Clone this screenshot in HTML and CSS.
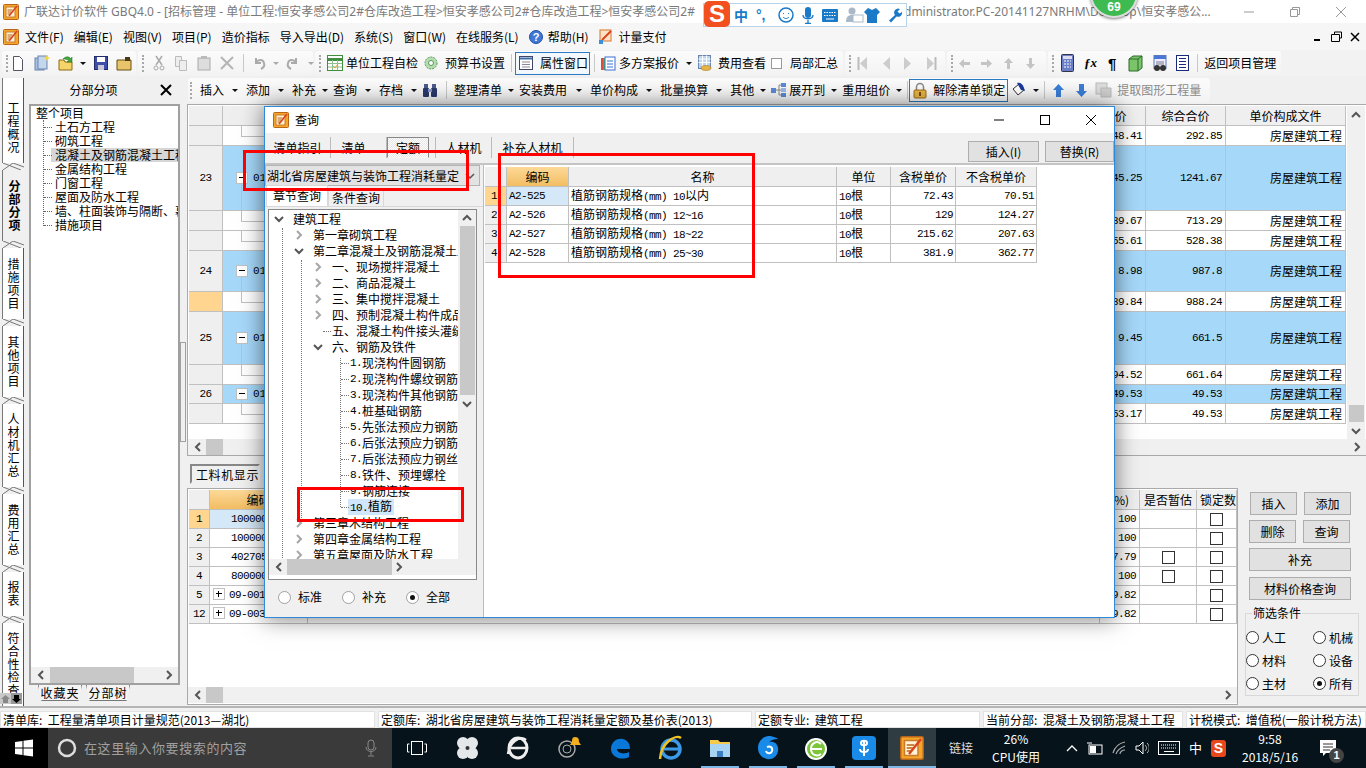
FILE: index.html
```html
<!DOCTYPE html>
<html>
<head>
  <meta charset="utf-8">
  <title>广联达计价软件 GBQ4.0</title>
  <link rel="stylesheet" href="styles.css">
</head>
<body>
  <svg class="defs" width="0" height="0">
    <symbol id="logo" viewBox="0 0 16 16">
      <rect x=".5" y=".5" width="15" height="15" rx="1" fill="#f5a62a" stroke="#b8641a"/>
      <rect x="3" y="3" width="9" height="10" fill="#fff3d6" stroke="#c97a2a"/>
      <path d="M4.5 6h5M4.5 8h4M4.5 10h3" stroke="#b8641a"/>
      <path d="M6 12L14 2" stroke="#d9431e" stroke-width="1.6"/>
    </symbol>
    <symbol id="chev-r" viewBox="0 0 10 10"><path d="M3 1l4 4-4 4" fill="none" stroke="#a6a6a6" stroke-width="2"/></symbol>
    <symbol id="chev-d" viewBox="0 0 10 10"><path d="M1 3l4 4 4-4" fill="none" stroke="#555" stroke-width="2"/></symbol>
  </svg>

  <header class="titlebar">
    <svg class="ic16"><use href="#logo"/></svg>
    <span class="title-a">广联达计价软件 GBQ4.0 - [招标管理 - 单位工程:恒安孝感公司2#仓库改造工程&gt;恒安孝感公司2#仓库改造工程&gt;恒安孝感公司2#</span>
    <span class="title-b">dministrator.PC-20141127NRHM\Desktop\恒安孝感公...</span>
    <div class="win-btns">
      <svg width="12" height="12"><path d="M1 6h10" stroke="#999"/></svg>
      <svg width="12" height="12"><path d="M3.500 3.500v-2h7v7h-2M1.500 3.500h7v7h-7z" fill="none" stroke="#999"/></svg>
      <svg width="12" height="12"><path d="M1 1l10 10M11 1L1 11" stroke="#999"/></svg>
    </div>
  </header>

  <nav class="menubar">
    <svg class="ic16"><use href="#logo"/></svg>
    <span>文件(F)</span><span>编辑(E)</span><span>视图(V)</span><span>项目(P)</span><span>造价指标</span><span>导入导出(D)</span><span>系统(S)</span><span>窗口(W)</span><span>在线服务(L)</span>
    <span class="menu-ic">
      <svg width="14" height="14"><circle cx="7" cy="7" r="6.500" fill="#3f78d8" stroke="#1f4fa8"/><text x="7" y="11" class="svg-q">?</text></svg>
      帮助(H)
    </span>
    <span class="menu-ic">
      <svg width="15" height="16"><rect x="2" y="1" width="11" height="11" fill="#fbe3c8" stroke="#d8752a"/><path d="M4 11L13 2" stroke="#d9431e" stroke-width="2"/><path d="M1 11l4 0 0 4-4 0z" fill="#3a8ee0"/></svg>
      计量支付
    </span>
    <div class="child-btns">
      <svg width="10" height="10"><path d="M1 8h6" stroke="#000" stroke-width="2"/></svg>
      <svg width="11" height="11"><path d="M3.500 3V1h7v6h-2M.5 3.500h8v7h-8z" fill="none" stroke="#000"/></svg>
      <svg width="10" height="10"><path d="M1 1l8 8M9 1L1 9" stroke="#000" stroke-width="1.500"/></svg>
    </div>
  </nav>

  <div class="toolbar">
    <div class="tb-group g-file">
      <i class="grip"></i>
      <svg width="12" height="15"><path d="M1.500.5h6l3 3v11h-9z" fill="#fff" stroke="#556"/></svg>
      <svg class="s-multi" width="16" height="16"><rect x="1" y="3" width="9" height="12" fill="#a9c0e0" stroke="#6a84ad"/><rect x="4" y="1" width="9" height="13" fill="#c4d6ee" stroke="#6a84ad"/><path d="M13 0l1 2 2 1-2 1-1 2-1-2-2-1 2-1z" fill="#f6d63c"/></svg>
      <svg width="16" height="16"><path d="M1 5h5l1 2h7v8H1z" fill="#f5d56a" stroke="#8a6a12"/><path d="M5 4c3-3 6-3 8 0l1-2v5h-5l2-1c-2-2-4-2-6-2z" fill="#3fa83a" stroke="#1f6e1f" stroke-width=".5"/></svg>
      <i class="caret s-caret"></i>
      <svg width="14" height="14"><rect x=".5" y=".5" width="13" height="13" fill="#3d4fa8" stroke="#222a6a"/><rect x="3" y="1" width="8" height="5" fill="#fff"/><rect x="4" y="9" width="6" height="5" fill="#c8c8d8"/></svg>
      <svg width="16" height="15"><path d="M1 4h14v10H1z" fill="#e8c56a" stroke="#6a4e12"/><path d="M9 1h5v4H9z" fill="#4a3a18"/></svg>
    </div>
    <div class="tb-group g-edit">
      <i class="grip"></i>
      <svg width="12" height="16"><path d="M3 1l6 9M9 1L3 10" stroke="#aaa" stroke-width="1.500"/><circle cx="3" cy="13" r="2" fill="none" stroke="#aaa"/><circle cx="9" cy="13" r="2" fill="none" stroke="#aaa"/></svg>
      <svg width="14" height="15"><path d="M1.500.5h6v10h-6z" fill="#eee" stroke="#bbb"/><path d="M5.500 4.500h7v10h-7z" fill="#eee" stroke="#bbb"/></svg>
      <svg width="14" height="15"><rect x="1" y="2" width="12" height="12" fill="#ddd" stroke="#aaa"/><rect x="4" y="0" width="6" height="3" fill="#bbb"/></svg>
      <svg width="14" height="14"><path d="M1 1l12 12M13 1L1 13" stroke="#b5b5b5" stroke-width="2"/></svg>
      <i class="sep"></i>
      <svg width="14" height="14"><path d="M3 2v5h5M3 7c2-4 7-4 8 0 1 3-1 5-3 6" fill="none" stroke="#aaa" stroke-width="2"/></svg>
      <i class="caret off tight"></i>
      <svg class="tight" width="14" height="14"><path d="M11 2v5H6M11 7C9 3 4 3 3 7c-1 3 1 5 3 6" fill="none" stroke="#aaa" stroke-width="2"/></svg>
      <i class="caret off"></i>
    </div>
    <div class="tb-group g-tools">
      <i class="grip"></i>
      <svg class="ml6" width="16" height="16"><rect x=".5" y=".5" width="15" height="15" fill="#fff" stroke="#3f8f3f"/><path d="M.5 4.500h15" stroke="#3f8f3f" stroke-width="3"/><path d="M5.500 5v10M10.500 5v10M1 8.500h14M1 12h14" stroke="#8fbf8f"/><path d="M6 11l2 2 3-4" fill="none" stroke="#e0a020"/></svg>
      <span class="ml3">单位工程自检</span>
      <svg class="ml6" width="14" height="14"><circle cx="7" cy="7" r="6" fill="#b6dcb0" stroke="#4f9a5a" stroke-dasharray="2 1"/><circle cx="7" cy="7" r="2.500" fill="#fff" stroke="#4f9a5a"/></svg>
      <span class="ml7">预算书设置</span>
      <i class="sep ml6"></i>
      <span class="tb-active">
        <svg width="14" height="14"><rect x=".5" y=".5" width="13" height="13" fill="#fff" stroke="#446"/><path d="M.5 2.500h13" stroke="#3a6ea8" stroke-width="2"/><path d="M3 6h8M3 8.500h8M3 11h8" stroke="#889"/></svg>
        属性窗口
      </span>
      <i class="sep ml4"></i>
      <svg class="ml5" width="16" height="15"><rect x="1" y="2" width="6" height="12" fill="#e04a3a"/><rect x="3" y="2" width="6" height="12" fill="#48b04a"/><rect x="5" y="1" width="10" height="13" fill="#fff" stroke="#3a6ed8"/><path d="M7 5h6M7 8h6M7 11h6" stroke="#3a6ed8"/></svg>
      <span class="ml3">多方案报价</span>
      <i class="caret w19"></i>
      <svg width="14" height="16"><rect x=".5" y=".5" width="12" height="13" fill="#bcd6ee" stroke="#6a84ad"/><path d="M.5 4h12M.5 7.500h12M4.500 .5v13M8.500 .5v13" stroke="#fff"/><ellipse cx="8" cy="13" rx="5" ry="2.500" fill="#e6b445" stroke="#9a6a12" stroke-width=".5"/></svg>
      <span class="ml6">费用查看</span>
      <i class="chk chk-sm ml5"></i>
      <span class="ml8">局部汇总</span>
    </div>
    <div class="tb-group g-nav">
      <i class="grip"></i>
      <svg class="ml6" width="11" height="15"><path d="M1.500 1v13" stroke="#bbb" stroke-width="2"/><path d="M10 1L3 7.500 10 14z" fill="#ccc"/></svg>
      <svg class="ml14" width="8" height="15"><path d="M8 1L1 7.500 8 14z" fill="#ccc"/></svg>
      <svg class="ml14" width="8" height="15"><path d="M0 1l7 6.500L0 14z" fill="#ccc"/></svg>
      <svg class="ml14" width="11" height="15"><path d="M9.500 1v13" stroke="#bbb" stroke-width="2"/><path d="M1 1l7 6.500L1 14z" fill="#ccc"/></svg>
    </div>
    <div class="tb-group g-arrows">
      <i class="grip"></i>
      <svg class="ml6" width="11" height="11"><path d="M0 5.500L5 1v3h6v3H5v3z" fill="#c4c4c4"/></svg>
      <svg class="ml11" width="11" height="11"><path d="M11 5.500L6 1v3H0v3h6v3z" fill="#c4c4c4"/></svg>
      <svg class="ml11" width="11" height="11"><path d="M5.500 0L1 5h3v6h3V5h3z" fill="#c4c4c4"/></svg>
      <svg class="ml11" width="11" height="11"><path d="M5.500 11L1 6h3V0h3v6h3z" fill="#c4c4c4"/></svg>
    </div>
    <div class="tb-group g-misc">
      <i class="grip"></i>
      <svg class="ml7" width="13" height="18"><rect x=".5" y=".5" width="12" height="17" rx="1" fill="#6a7fc8" stroke="#334"/><rect x="2" y="2" width="9" height="3" fill="#dde"/><path d="M3 7h2M6 7h2M9 7h1M3 10h2M6 10h2M9 10h1M3 13h2M6 13h2M9 13h1" stroke="#fff"/></svg>
      <span class="fx">ƒx</span>
      <span class="pilcrow">¶</span>
      <svg class="ml12" width="15" height="17"><path d="M1 4l4-3h9v12l-4 3H1z" fill="#7cc46a" stroke="#2a6a2a"/><path d="M1 4h9v12M10 4l4-3" fill="none" stroke="#2a6a2a"/></svg>
      <svg class="ml9" width="16" height="17"><rect x="2" y=".5" width="12" height="13" fill="#eef" stroke="#5a78b8"/><path d="M2 2.500h12" stroke="#4a78d8" stroke-width="3"/><path d="M4 7h8M4 9h8" stroke="#778"/><circle cx="5" cy="13" r="3" fill="#333"/><circle cx="11" cy="13" r="3" fill="#333"/></svg>
      <svg class="ml8" width="13" height="16"><rect x=".5" y=".5" width="12" height="15" fill="#fff" stroke="#1a2a7a"/><path d="M3 3.500h7M3 6.500h7M3 9.500h7M3 12.500h7" stroke="#1a2a7a"/></svg>
      <i class="sep ml8"></i>
      <span class="ml6">返回项目管理</span>
    </div>
  </div>

  <main class="workspace">
    <div class="side-tabs">
      <div class="side-tab first">工程概况</div>
      <svg class="tab-sep" width="24" height="7"><path d="M3 0l18 7M3 7l10-7 11 4" fill="none" stroke="#777"/></svg>
      <div class="side-tab current">分部分项</div>
      <svg class="tab-sep" width="24" height="7"><path d="M3 0l18 7M3 7l10-7 11 4" fill="none" stroke="#777"/></svg>
      <div class="side-tab">措施项目</div>
      <svg class="tab-sep" width="24" height="7"><path d="M3 0l18 7M3 7l10-7 11 4" fill="none" stroke="#777"/></svg>
      <div class="side-tab">其他项目</div>
      <svg class="tab-sep" width="24" height="7"><path d="M3 0l18 7M3 7l10-7 11 4" fill="none" stroke="#777"/></svg>
      <div class="side-tab tall">人材机汇总</div>
      <svg class="tab-sep" width="24" height="7"><path d="M3 0l18 7M3 7l10-7 11 4" fill="none" stroke="#777"/></svg>
      <div class="side-tab">费用汇总</div>
      <svg class="tab-sep" width="24" height="7"><path d="M3 0l18 7M3 7l10-7 11 4" fill="none" stroke="#777"/></svg>
      <div class="side-tab short">报表</div>
      <svg class="tab-sep" width="24" height="7"><path d="M3 0l18 7M3 7l10-7 11 4" fill="none" stroke="#777"/></svg>
      <div class="side-tab last">符合性检查</div>
      <div class="tab-scroll">
        <span class="up"><svg width="9" height="8"><path d="M4.500 0L0 4h2v4h5V4h2z" fill="#888"/></svg></span>
        <span class="down"><svg width="9" height="8"><path d="M4.500 8L0 4h2V0h5v4h2z" fill="#000"/></svg></span>
      </div>
    </div>

    <aside class="tree-panel">
      <div class="tree-head">
        <span>分部分项</span>
        <svg width="12" height="12"><path d="M1 1l10 10M11 1L1 11" stroke="#000" stroke-width="2"/></svg>
      </div>
      <div class="tree-frame">
        <div class="tree-body">
          <div class="t-root">整个项目</div>
          <i class="t-vline"></i>
          <div class="t-item">土石方工程</div>
          <div class="t-item">砌筑工程</div>
          <div class="t-item sel">混凝土及钢筋混凝土工程</div>
          <div class="t-item">金属结构工程</div>
          <div class="t-item">门窗工程</div>
          <div class="t-item">屋面及防水工程</div>
          <div class="t-item">墙、柱面装饰与隔断、幕墙工程</div>
          <div class="t-item">措施项目</div>
        </div>
        <div class="hscroll">
          <svg class="arrow" width="10" height="10"><path d="M7 1L3 5l4 4" fill="none" stroke="#555" stroke-width="2"/></svg>
          <i class="thumb th-tree"></i>
          <svg class="arrow end" width="10" height="10"><path d="M3 1l4 4-4 4" fill="none" stroke="#555" stroke-width="2"/></svg>
        </div>
      </div>
      <div class="bottom-tabs">
        <span>收藏夹</span><span>分部树</span>
      </div>
    </aside>

    <div class="splitter"><i></i></div>

    <section class="content">
      <div class="toolbar2">
        <i class="grip"></i>
        <span class="ml8">插入</span><i class="caret dd"></i>
        <span>添加</span><i class="caret dd"></i>
        <span>补充</span><i class="caret dd-s"></i>
        <span>查询</span><i class="caret dd"></i>
        <span>存档</span><i class="caret dd"></i>
        <svg class="tight" width="16" height="15"><rect x="2" y="1" width="4" height="5" fill="#4a5a8a"/><rect x="10" y="1" width="4" height="5" fill="#4a5a8a"/><rect x="1" y="5" width="6" height="9" rx="1" fill="#2a3a6a"/><rect x="9" y="5" width="6" height="9" rx="1" fill="#2a3a6a"/><rect x="6" y="6" width="4" height="3" fill="#8a9aca"/></svg>
        <i class="sep ml8"></i>
        <span class="ml7">整理清单</span><i class="caret dd-s"></i>
        <span>安装费用</span><i class="caret dd-l"></i>
        <span>单价构成</span><i class="caret dd"></i>
        <span>批量换算</span><i class="caret dd"></i>
        <span>其他</span><i class="caret dd-s"></i>
        <svg width="15" height="14"><rect x="0" y="5" width="5" height="5" fill="#5a8ad8"/><rect x="10" y="0" width="5" height="4" fill="#5a8ad8"/><rect x="10" y="5" width="5" height="4" fill="#9ab8e8"/><rect x="10" y="10" width="5" height="4" fill="#5a8ad8"/><path d="M5 7h3M8 2v10M8 2h2M8 7h2M8 12h2" stroke="#888" fill="none"/></svg>
        <span class="ml3">展开到</span><i class="caret dd-s"></i>
        <span>重用组价</span><i class="caret dd-s"></i>
        <i class="sep"></i>
        <span class="tb-active lock">
          <svg width="14" height="17"><path d="M3.500 8V5a3.500 3.500 0 0 1 7 0v3" fill="none" stroke="#888" stroke-width="1.500"/><rect x="1" y="8" width="12" height="8" rx="1" fill="#e6b445" stroke="#9a6a12"/><rect x="6" y="10" width="2" height="4" fill="#7a4a12"/></svg>
          解除清单锁定
        </span>
        <svg class="ml3" width="16" height="16"><path d="M2 7l6-5 5 6-6 5z" fill="#fff" stroke="#333"/><path d="M6 1c3-1 6 1 7 5l1 3-4-1z" fill="#1a3a9a"/></svg>
        <i class="caret dd-s"></i>
        <i class="sep"></i>
        <svg class="ml8" width="11" height="13"><path d="M5.500 0L0 6h3v7h5V6h3z" fill="#3a7ed8"/></svg>
        <svg class="ml12" width="11" height="13"><path d="M5.500 13L0 7h3V0h5v7h3z" fill="#3a7ed8"/></svg>
        <svg class="ml8" width="17" height="16"><rect x="1" y="1" width="11" height="11" fill="#ddd" stroke="#bbb"/><path d="M6 6h10v9H6z" fill="#cfcfcf" stroke="#bbb"/></svg>
        <span class="off ml5">提取图形工程量</span>
      </div>

      <div class="grid-panel">
        <div class="grid-main">
          <table class="grid upper">
            <colgroup><col class="c34"><col class="c837"><col class="c86"><col class="c80"><col class="c120"></colgroup>
            <thead><tr class="h20"><th></th><th></th><th>综合单价</th><th>综合合价</th><th>单价构成文件</th></tr></thead>
            <tbody>
              <tr class="h20"><td class="rn"></td><td><div class="branch"></div></td><td class="num">148.41</td><td class="num">292.85</td><td class="end">房屋建筑工程</td></tr>
              <tr class="h65 blue"><td class="rn num-c">23</td><td class="node"><i class="minus"></i>01</td><td class="num">645.25</td><td class="num">1241.67</td><td class="end">房屋建筑工程</td></tr>
              <tr class="h20"><td class="rn"></td><td><div class="branch"></div></td><td class="num">539.67</td><td class="num">713.29</td><td class="end">房屋建筑工程</td></tr>
              <tr class="h20"><td class="rn"></td><td><div class="branch"></div></td><td class="num">355.61</td><td class="num">528.38</td><td class="end">房屋建筑工程</td></tr>
              <tr class="h41 blue"><td class="rn num-c">24</td><td class="node"><i class="minus"></i>01</td><td class="num">8.98</td><td class="num">987.8</td><td class="end">房屋建筑工程</td></tr>
              <tr class="h20"><td class="rn pick"></td><td><div class="branch"></div></td><td class="num">939.84</td><td class="num">988.24</td><td class="end">房屋建筑工程</td></tr>
              <tr class="h53 blue"><td class="rn num-c">25</td><td class="node"><i class="minus"></i>01</td><td class="num">9.45</td><td class="num">661.5</td><td class="end">房屋建筑工程</td></tr>
              <tr class="h20"><td class="rn"></td><td><div class="branch"></div></td><td class="num">594.52</td><td class="num">661.64</td><td class="end">房屋建筑工程</td></tr>
              <tr class="h19 blue"><td class="rn num-c">26</td><td class="node"><i class="minus"></i>01</td><td class="num">49.53</td><td class="num">49.53</td><td class="end">房屋建筑工程</td></tr>
              <tr class="h20"><td class="rn"></td><td><div class="branch"></div></td><td class="num">353.17</td><td class="num">49.53</td><td class="end">房屋建筑工程</td></tr>
            </tbody>
          </table>
          <div class="vscroll">
            <svg width="10" height="10"><path d="M1 7l4-4 4 4" fill="none" stroke="#555" stroke-width="2"/></svg>
            <i class="vthumb"></i>
            <svg width="10" height="10"><use href="#chev-d"/></svg>
          </div>
        </div>
        <div class="hscroll">
          <svg class="arrow" width="10" height="10"><path d="M7 1L3 5l4 4" fill="none" stroke="#555" stroke-width="2"/></svg>
          <i class="thumb th-grid"></i>
          <svg class="arrow end" width="10" height="10"><path d="M3 1l4 4-4 4" fill="none" stroke="#555" stroke-width="2"/></svg>
        </div>
      </div>

      <div class="lower-tabs"><span>工料机显示</span></div>

      <div class="lower">
        <div class="lower-grid">
          <div class="lower-main">
            <table class="grid">
              <colgroup><col class="c21"><col class="c98"><col class="c792"><col class="c40"><col class="c57"><col class="c40"></colgroup>
              <thead><tr class="h20"><th></th><th class="hot">编码</th><th></th><th>(%)</th><th>是否暂估</th><th>锁定数</th></tr></thead>
              <tbody>
                <tr class="h19"><td class="rn pick num-c">1</td><td class="cur num-l">10000001</td><td></td><td class="num">100</td><td></td><td class="cb"><i class="chk"></i></td></tr>
                <tr class="h19"><td class="rn num-c">2</td><td class="num-l">10000002</td><td></td><td class="num">100</td><td></td><td class="cb"><i class="chk"></i></td></tr>
                <tr class="h19"><td class="rn num-c">3</td><td class="num-l">40270501</td><td></td><td class="num">87.79</td><td class="cb"><i class="chk"></i></td><td class="cb"><i class="chk"></i></td></tr>
                <tr class="h19"><td class="rn num-c">4</td><td class="num-l">80000001</td><td></td><td class="num">100</td><td class="cb"><i class="chk"></i></td><td class="cb"><i class="chk"></i></td></tr>
                <tr class="h19"><td class="rn num-c">5</td><td class="num-l plus-cell"><i class="plus"></i>09-001</td><td></td><td class="num">59.82</td><td></td><td class="cb"><i class="chk"></i></td></tr>
                <tr class="h19"><td class="rn num-c">12</td><td class="num-l plus-cell"><i class="plus"></i>09-003</td><td></td><td class="num">59.82</td><td></td><td class="cb"><i class="chk"></i></td></tr>
              </tbody>
            </table>
          </div>
          <div class="hscroll">
            <svg class="arrow" width="10" height="10"><path d="M7 1L3 5l4 4" fill="none" stroke="#555" stroke-width="2"/></svg>
            <i class="thumb th-grid"></i>
            <svg class="arrow end" width="10" height="10"><path d="M3 1l4 4-4 4" fill="none" stroke="#555" stroke-width="2"/></svg>
          </div>
        </div>

        <div class="side-panel">
          <div class="btn-row first"><button class="btn">插入</button><button class="btn">添加</button></div>
          <div class="btn-row"><button class="btn">删除</button><button class="btn">查询</button></div>
          <button class="btn wide">补充</button>
          <button class="btn wide">材料价格查询</button>
          <fieldset class="filter">
            <legend>筛选条件</legend>
            <label><i class="radio"></i>人工</label><label><i class="radio"></i>机械</label>
            <label><i class="radio"></i>材料</label><label><i class="radio"></i>设备</label>
            <label><i class="radio"></i>主材</label><label><i class="radio on"></i>所有</label>
          </fieldset>
        </div>
      </div>
    </section>
  </main>

  <footer class="statusbar">
    <span class="s1">清单库:&nbsp; 工程量清单项目计量规范(2013—湖北)</span>
    <span class="s2">定额库:&nbsp; 湖北省房屋建筑与装饰工程消耗量定额及基价表(2013)</span>
    <span class="s3">定额专业:&nbsp; 建筑工程</span>
    <span class="s4">当前分部:&nbsp; 混凝土及钢筋混凝土工程</span>
    <span class="s5">计税模式:&nbsp; 增值税(一般计税方法)</span>
  </footer>

  <div class="taskbar">
    <div class="start"><svg width="18" height="18"><path d="M0 3l7.500-1v6.500H0zM8.500 1.800L18 .5v8H8.500zM0 9.500h7.500V16L0 15zM8.500 9.500H18v8l-9.500-1.300z" fill="#fff"/></svg></div>
    <div class="search">
      <svg width="20" height="20"><circle cx="10" cy="10" r="8" fill="none" stroke="#ddd" stroke-width="2.500"/></svg>
      <span>在这里输入你要搜索的内容</span>
      <svg class="mic" width="12" height="18"><rect x="3" y="1" width="6" height="10" rx="3" fill="none" stroke="#888"/><path d="M1 8c0 6 10 6 10 0M6 13v3M3 17h6" fill="none" stroke="#888"/></svg>
    </div>
    <div class="task tv"><svg width="20" height="16"><rect x="4.500" y="1.500" width="11" height="13" fill="none" stroke="#fff"/><path d="M2.500 4H.5v8h2M17.500 4h2v8h-2" fill="none" stroke="#fff"/></svg></div>
    <div class="task wide"><svg width="22" height="24"><g fill="#e4e8ea"><circle cx="7" cy="7" r="6"/><circle cx="16" cy="7" r="6"/><circle cx="7" cy="17" r="6"/><circle cx="16" cy="17" r="6"/></g><circle cx="11.500" cy="12" r="2" fill="#333"/></svg></div>
    <div class="task wide"><svg width="24" height="24"><ellipse cx="12" cy="12" rx="9" ry="10" fill="none" stroke="#eee" stroke-width="3"/><path d="M5 12h15M20 4C14 -1 3 6 2 18" fill="none" stroke="#eee" stroke-width="2.500"/></svg></div>
    <div class="task wide"><svg width="26" height="26"><circle cx="11" cy="14" r="8" fill="none" stroke="#aaa" stroke-width="1.500"/><circle cx="11" cy="14" r="4" fill="none" stroke="#aaa"/><path d="M19 2c-3 0-3 3-3 5l-2 3h11l-2-3c0-2 0-5-4-5z" fill="#f2b01e"/></svg></div>
    <div class="task wide"><svg width="24" height="24"><path d="M3 13C3 5 10 2 15 3c4 1 7 4 7 10H9c0 4 7 6 12 3v5c-8 4-18 0-18-8z" fill="#0a78d8"/></svg></div>
    <div class="task wide"><svg width="26" height="26"><circle cx="13" cy="14" r="9" fill="none" stroke="#3a9ae8" stroke-width="3.500"/><path d="M6 14h15" stroke="#3a9ae8" stroke-width="3"/><path d="M23 3C17-1 3 8 2 24" fill="none" stroke="#f2c21e" stroke-width="2.500"/></svg></div>
    <div class="task run"><svg width="22" height="22"><path d="M1 3h8l2 2h10v15H1z" fill="#f5c94a"/><rect x="1" y="7" width="20" height="13" fill="#a8d4f2"/><rect x="8" y="14" width="6" height="6" fill="#3a7ec8"/></svg></div>
    <div class="task run"><svg width="22" height="26"><path d="M11 1c5 0 9 2 10 3-4 0-7 1-9 3 5-1 10 2 9 9-1 6-6 9-11 8C4 23 1 18 1 13 1 7 5 2 11 1z" fill="#1a8ae8"/><path d="M10 12c3-1 6 0 5 4-1 3-5 3-6 0" fill="none" stroke="#fff" stroke-width="2"/></svg></div>
    <div class="task run"><svg width="24" height="26"><circle cx="12" cy="14" r="11" fill="#fff"/><circle cx="12" cy="14" r="9" fill="#7cc43a"/><path d="M6 14h12M17 9c-4-4-10-1-10 5s6 8 10 5" fill="none" stroke="#fff" stroke-width="2"/></svg></div>
    <div class="task run"><svg width="24" height="24"><rect width="24" height="24" rx="4" fill="#1a8ae8"/><path d="M12 4v16M8 13c0 4 8 4 8 0M9 7c0-3 6-3 6 0s-6 3-6 0" fill="none" stroke="#fff" stroke-width="2"/></svg></div>
    <div class="task run on"><svg width="24" height="24"><use href="#logo"/></svg></div>
    <span class="t-link">链接</span>
    <div class="t-cpu"><span>26%</span><span>CPU使用</span></div>
    <div class="tray">
      <svg width="12" height="8"><path d="M1 7l5-5 5 5" fill="none" stroke="#fff" stroke-width="1.300"/></svg>
      <svg width="16" height="13"><rect x="2" y="3" width="13" height="9" fill="none" stroke="#fff"/><rect x="3" y="4" width="6" height="7" fill="#fff"/><path d="M0 1h5" stroke="#fff"/></svg>
      <svg width="14" height="14"><path d="M1 12C3 5 8 2 13 1M4 13c1-4 4-6 9-8M8 13c0-2 2-4 5-4" fill="none" stroke="#aaa" stroke-width="1.200"/></svg>
      <svg width="14" height="14"><path d="M1 5h3l4-4v12L4 9H1z" fill="none" stroke="#fff"/><path d="M10 4c2 2 2 4 0 6M12 2c3 3 3 7 0 10" fill="none" stroke="#bbb"/></svg>
      <svg width="22" height="14"><rect x=".5" y=".5" width="21" height="13" fill="none" stroke="#fff"/><path d="M3 4h16M3 7h16" stroke="#fff" stroke-dasharray="1 1"/><path d="M6 10.500h10" stroke="#fff"/></svg>
      <span class="t-ime">中</span>
      <span class="t-s">S</span>
    </div>
    <div class="t-clock"><span>9:58</span><span>2018/5/16</span></div>
    <div class="t-note">
      <svg width="16" height="16"><path d="M0 0h16v13H6l-3 3v-3H0z" fill="#fff"/><path d="M3 4h10M3 7h10M3 10h7" stroke="#333"/></svg>
      <b>1</b>
    </div>
  </div>

  <!-- query dialog, sits over the main window -->
  <div class="dialog">
    <div class="dlg-title">
      <svg class="ic16"><use href="#logo"/></svg>
      <span>查询</span>
      <div class="dlg-btns">
        <svg width="12" height="12"><path d="M1 6h10" stroke="#000"/></svg>
        <svg width="12" height="12"><rect x="1.500" y="1.500" width="9" height="9" fill="none" stroke="#000"/></svg>
        <svg width="12" height="12"><path d="M1 1l10 10M11 1L1 11" stroke="#000"/></svg>
      </div>
    </div>
    <div class="dlg-tabs">
      <span class="tab t1">清单指引</span>
      <span class="tab t2">清单</span>
      <span class="tab cur-tab">定额</span>
      <span class="tab t4">人材机</span>
      <span class="tab t5">补充人材机</span>
      <button class="btn dlg-btn first">插入(I)</button>
      <button class="btn dlg-btn">替换(R)</button>
    </div>
    <div class="dlg-body">
      <div class="dlg-left">
        <div class="combo">
          <span>湖北省房屋建筑与装饰工程消耗量定</span>
          <svg width="10" height="10"><path d="M1 3l4 4 4-4" fill="none" stroke="#555" stroke-width="1.500"/></svg>
        </div>
        <div class="sub-tabs"><span class="on">章节查询</span><span>条件查询</span></div>
        <div class="q-frame">
          <div class="q-main">
            <div class="q-tree">
              <i class="q-v v1"></i><i class="q-v v2"></i><i class="q-v v3"></i>
              <div class="q-row l0"><svg class="chev" width="10" height="10"><use href="#chev-d"/></svg>建筑工程</div>
              <div class="q-row l1"><svg class="chev" width="10" height="10"><use href="#chev-r"/></svg>第一章砌筑工程</div>
              <div class="q-row l1"><svg class="chev" width="10" height="10"><use href="#chev-d"/></svg>第二章混凝土及钢筋混凝土工程</div>
              <div class="q-row l2"><svg class="chev" width="10" height="10"><use href="#chev-r"/></svg>一、现场搅拌混凝土</div>
              <div class="q-row l2"><svg class="chev" width="10" height="10"><use href="#chev-r"/></svg>二、商品混凝土</div>
              <div class="q-row l2"><svg class="chev" width="10" height="10"><use href="#chev-r"/></svg>三、集中搅拌混凝土</div>
              <div class="q-row l2"><svg class="chev" width="10" height="10"><use href="#chev-r"/></svg>四、预制混凝土构件成品</div>
              <div class="q-row l2 dot">五、混凝土构件接头灌缝</div>
              <div class="q-row l2"><svg class="chev" width="10" height="10"><use href="#chev-d"/></svg>六、钢筋及铁件</div>
              <div class="q-row l3"><span class="n">1.</span>现浇构件圆钢筋</div>
              <div class="q-row l3"><span class="n">2.</span>现浇构件螺纹钢筋</div>
              <div class="q-row l3"><span class="n">3.</span>现浇构件其他钢筋</div>
              <div class="q-row l3"><span class="n">4.</span>桩基础钢筋</div>
              <div class="q-row l3"><span class="n">5.</span>先张法预应力钢筋</div>
              <div class="q-row l3"><span class="n">6.</span>后张法预应力钢筋</div>
              <div class="q-row l3"><span class="n">7.</span>后张法预应力钢丝</div>
              <div class="q-row l3"><span class="n">8.</span>铁件、预埋螺栓</div>
              <div class="q-row l3"><span class="n">9.</span>钢筋连接</div>
              <div class="q-row l3"><span class="q-sel"><span class="n">10.</span>植筋</span></div>
              <div class="q-row l1"><svg class="chev" width="10" height="10"><use href="#chev-r"/></svg>第三章木结构工程</div>
              <div class="q-row l1"><svg class="chev" width="10" height="10"><use href="#chev-r"/></svg>第四章金属结构工程</div>
              <div class="q-row l1"><svg class="chev" width="10" height="10"><use href="#chev-r"/></svg>第五章屋面及防水工程</div>
            </div>
            <div class="vscroll q-vs">
              <svg width="10" height="10"><path d="M1 7l4-4 4 4" fill="none" stroke="#555" stroke-width="2"/></svg>
              <i class="vthumb q-thumb"></i>
              <svg class="q-down" width="10" height="10"><use href="#chev-d"/></svg>
            </div>
          </div>
          <div class="hscroll q-hs">
            <svg class="arrow" width="10" height="10"><path d="M7 1L3 5l4 4" fill="none" stroke="#555" stroke-width="2"/></svg>
            <i class="thumb th-q"></i>
            <svg class="arrow end" width="10" height="10"><path d="M3 1l4 4-4 4" fill="none" stroke="#555" stroke-width="2"/></svg>
          </div>
        </div>
        <div class="q-radios">
          <label><i class="radio soft"></i>标准</label>
          <label><i class="radio soft"></i>补充</label>
          <label><i class="radio soft on"></i>全部</label>
        </div>
      </div>
      <div class="dlg-right">
        <table class="grid q-grid">
          <colgroup><col class="c22"><col class="c62"><col class="c268"><col class="c54"><col class="c65"><col class="c81"></colgroup>
          <thead><tr class="h20"><th></th><th class="hot">编码</th><th>名称</th><th>单位</th><th>含税单价</th><th>不含税单价</th></tr></thead>
          <tbody>
            <tr class="h19"><td class="rn pick q-rn">1</td><td class="cur num-q">A2-525</td><td>植筋钢筋规格<span class="n">(mm) 10</span>以内</td><td><span class="n">10</span>根</td><td class="num">72.43</td><td class="num">70.51</td></tr>
            <tr class="h19"><td class="rn q-rn">2</td><td class="num-q">A2-526</td><td>植筋钢筋规格<span class="n">(mm) 12~16</span></td><td><span class="n">10</span>根</td><td class="num">129</td><td class="num">124.27</td></tr>
            <tr class="h19"><td class="rn q-rn">3</td><td class="num-q">A2-527</td><td>植筋钢筋规格<span class="n">(mm) 18~22</span></td><td><span class="n">10</span>根</td><td class="num">215.62</td><td class="num">207.63</td></tr>
            <tr class="h19"><td class="rn q-rn">4</td><td class="num-q">A2-528</td><td>植筋钢筋规格<span class="n">(mm) 25~30</span></td><td><span class="n">10</span>根</td><td class="num">381.9</td><td class="num">362.77</td></tr>
          </tbody>
        </table>
      </div>
    </div>
  </div>

  <!-- red markup boxes drawn on top of the screenshot -->
  <i class="mark m1"></i>
  <i class="mark m2"></i>
  <i class="mark m3"></i>

  <!-- sogou input bar -->
  <div class="ime">
    <span class="ime-logo">S</span>
    <span class="ime-zh">中</span>
    <span class="ime-pt">°,</span>
    <svg width="16" height="16"><circle cx="8" cy="8" r="7" fill="none" stroke="#1a7ac8" stroke-width="1.500"/><path d="M5 10c2 2 4 2 6 0M5.500 6v1M10.500 6v1" fill="none" stroke="#1a7ac8"/></svg>
    <svg width="12" height="17"><rect x="3" y="0" width="6" height="11" rx="3" fill="#1a7ac8"/><path d="M1 8c0 5 10 5 10 0M6 13v3M3 16.500h6" fill="none" stroke="#1a7ac8" stroke-width="1.300"/></svg>
    <svg width="16" height="13"><rect width="16" height="13" rx="1" fill="#1a7ac8"/><path d="M2 3.500h12M2 6.500h12" stroke="#fff" stroke-dasharray="1.500 1"/><path d="M4 10h8" stroke="#fff"/></svg>
    <svg class="ime-user" width="18" height="16"><circle cx="6" cy="4" r="3.500" fill="#a9b9c9"/><path d="M0 15c0-6 3-7 6-7s6 1 6 7z" fill="#a9b9c9"/><rect x="7" y="8" width="10" height="7" fill="#fff" stroke="#a9b9c9"/></svg>
    <svg width="16" height="15"><path d="M4 0l4 2 4-2 4 4-3 3v8H3V7L0 4z" fill="#1a7ac8"/></svg>
    <svg width="15" height="15"><path d="M14 4a4 4 0 0 1-5.500 4.500L3 14.500 1 12.500l6-5.500A4 4 0 0 1 12 1L9.500 3.500 11.500 5.500z" fill="#1a7ac8"/></svg>
  </div>

  <!-- speed ball over the title bar -->
  <div class="ball"><span>69</span></div>
</body>
</html>
```

FILE: styles.css
```css
* {
  box-sizing: border-box;
}

html, body {
  margin: 0;
  width: 1366px;
  height: 768px;
  overflow: hidden;
}

body {
  position: relative;
  background: #f0f0f0;
  color: #000;
  font-family: "Noto Sans CJK SC", "Liberation Sans", sans-serif;
  font-size: 12px;
  line-height: 14px;
}

i {
  font-style: normal;
}

svg {
  display: block;
  flex: none;
}

.defs {
  position: absolute;
}

.ic16 {
  width: 16px;
  height: 16px;
}

.svg-q {
  fill: #fff;
  font: bold 11px "Liberation Sans", sans-serif;
  text-anchor: middle;
}

/* spacing helpers */
.ml3 { margin-left: 3px; }
.ml4 { margin-left: 4px; }
.ml5 { margin-left: 5px; }
.ml6 { margin-left: 6px; }
.ml7 { margin-left: 7px; }
.ml8 { margin-left: 8px; }
.ml9 { margin-left: 9px; }
.ml11 { margin-left: 11px; }
.ml12 { margin-left: 12px; }
.ml14 { margin-left: 14px; }
.tight { margin-left: -3px; }

/* title bar */
.titlebar {
  display: flex;
  align-items: center;
  height: 23px;
  padding-left: 3px;
  background: #fff;
  color: #7a7a7a;
  font-family: "Noto Sans", "Noto Sans CJK SC", sans-serif;
}

.title-a {
  width: 680px;
  margin-left: 5px;
  overflow: hidden;
  white-space: nowrap;
}

.title-b {
  margin-left: 200px;
  white-space: nowrap;
}

.win-btns {
  display: flex;
  gap: 34px;
  margin-left: auto;
  padding-right: 19px;
}

/* menu */
.menubar {
  display: flex;
  align-items: center;
  gap: 10px;
  height: 27px;
  padding-left: 3px;
  background: #f6f6f6;
}

.menubar > svg {
  margin-right: -4px;
}

.menu-ic {
  display: flex;
  align-items: center;
  gap: 5px;
}

.child-btns {
  display: flex;
  align-items: center;
  gap: 8px;
  margin-left: auto;
  padding-right: 6px;
}

/* toolbars */
.toolbar {
  display: flex;
  gap: 2px;
  height: 26px;
  padding: 1px 0 1px 2px;
  background: #f2f2f2;
}

.tb-group {
  display: flex;
  align-items: center;
  padding: 0 4px;
  border-radius: 3px;
  background: linear-gradient(#fbfbfb, #f3f3f3);
  white-space: nowrap;
}

.g-file { width: 134px; gap: 8px; }
.g-edit { width: 175px; gap: 9px; }
.g-tools { width: 528px; }
.g-nav { width: 100px; }
.g-arrows { width: 99px; }
.g-misc { width: 233px; }

.g-file .grip {
  margin-right: -4px;
}

.s-multi {
  margin-left: 2px;
}

.s-caret {
  margin-left: -2px;
}

.grip {
  flex: none;
  width: 2px;
  height: 17px;
  border-left: 2px dotted #a8a8a8;
}

.sep {
  flex: none;
  width: 1px;
  height: 18px;
  background: #c8c8c8;
}

.caret {
  display: flex;
  flex: none;
  align-items: center;
  justify-content: center;
  height: 10px;
}

.caret::after {
  content: "";
  border-left: 3px solid transparent;
  border-right: 3px solid transparent;
  border-top: 3px solid #111;
}

.caret.off::after {
  border-top-color: #aaa;
}

.dd { width: 22px; }
.dd-s { width: 17px; }
.dd-l { width: 23px; }
.w19 { width: 19px; }

.tb-active {
  display: flex;
  align-items: center;
  gap: 7px;
  width: 75px;
  height: 23px;
  margin-left: 3px;
  padding-left: 3px;
  border: 1px solid #2b7cc4;
  background: #f3f8fc;
}

.tb-active.lock {
  width: 99px;
  gap: 6px;
  padding-left: 3px;
  margin-left: 1px;
  background: #fbfbfb;
}

.fx {
  margin-left: 10px;
  font: italic bold 13px "Liberation Serif", serif;
}

.pilcrow {
  margin-left: 11px;
  font: bold 15px "Liberation Sans", sans-serif;
}

.off {
  color: #8a8a8a;
}

/* main area */
.workspace {
  display: flex;
  height: 630px;
}

.side-tabs {
  position: relative;
  flex: none;
  width: 27px;
  height: 630px;
  padding-top: 2px;
  overflow: hidden;
}

.side-tab {
  display: flex;
  width: 22px;
  height: 71px;
  margin-left: 2px;
  padding: 9px 0;
  border-left: 1px solid #777;
  border-right: 1px solid #555;
  background: #fff;
  justify-content: center;
  writing-mode: vertical-rl;
  text-orientation: upright;
  letter-spacing: 1px;
  line-height: 20px;
  white-space: nowrap;
}

.side-tab.tall { height: 83px; }
.side-tab.short { height: 44px; }

.side-tab.last {
  height: 90px;
  justify-content: flex-start;
}

.side-tab.first {
  height: 85px;
  padding: 0 0 9px;
  justify-content: flex-end;
}

.side-tab.current {
  background: #f0f0f0;
  border-right: 0;
  font-weight: 700;
}

.tab-scroll {
  position: absolute;
  left: 0;
  top: 617px;
  display: flex;
}

.tab-scroll span {
  display: flex;
  align-items: center;
  justify-content: center;
  width: 11px;
  height: 11px;
  background: #c8c8c8;
}

.tab-scroll .down {
  background: #999;
}

/* left tree */
.tree-panel {
  flex: none;
  width: 151px;
  margin-left: 2px;
}

.tree-head {
  position: relative;
  display: flex;
  align-items: center;
  justify-content: center;
  height: 28px;
  padding-right: 22px;
}

.tree-head svg {
  position: absolute;
  right: 8px;
  top: 8px;
}

.tree-frame {
  height: 581px;
  border: 2px solid #a0a0a0;
  background: #fff;
}

.tree-body {
  position: relative;
  height: 561px;
  overflow: hidden;
}

.t-root {
  height: 14px;
  padding-left: 5px;
  white-space: nowrap;
}

.t-item {
  position: relative;
  height: 14px;
  padding-left: 24px;
  white-space: nowrap;
}

.t-item::before {
  content: "";
  position: absolute;
  left: 13px;
  top: 7px;
  width: 8px;
  border-top: 1px dotted #666;
}

.t-item.sel {
  margin-left: 20px;
  padding-left: 4px;
  background: #d6d6d6;
}

.t-item.sel::before {
  left: -7px;
}

.t-vline {
  position: absolute;
  left: 12px;
  top: 14px;
  height: 106px;
  border-left: 1px dotted #666;
}

.hscroll {
  display: flex;
  align-items: center;
  height: 16px;
  padding-left: 5px;
  background: #f0f0f0;
}

.hscroll .end {
  margin-left: auto;
  margin-right: 4px;
}

.thumb {
  flex: none;
  height: 16px;
  background: #c8c8c8;
}

.th-tree { width: 84px; margin-left: 4px; }
.th-grid { width: 17px; margin-left: 3px; }
.th-q { width: 105px; margin-left: 3px; }

.bottom-tabs {
  display: flex;
  gap: 4px;
  height: 20px;
  padding-left: 9px;
  letter-spacing: 1px;
}

.bottom-tabs span {
  display: flex;
  align-items: center;
  justify-content: center;
  width: 44px;
  height: 16px;
  background: #f4f4f4;
  border-bottom: 1px solid #777;
  border-left: 1px solid #777;
  border-right: 1px solid #777;
  clip-path: polygon(0 0, 100% 0, 92% 100%, 8% 100%);
}

/* splitter */
.splitter {
  display: flex;
  flex: none;
  width: 7px;
  padding-top: 266px;
}

.splitter i {
  width: 6px;
  height: 100px;
  border: 1px solid #a0a0a0;
  background: #f0f0f0;
}

/* content column */
.content {
  flex: none;
  width: 1179px;
}

.toolbar2 {
  display: flex;
  align-items: center;
  width: 1022px;
  height: 24px;
  margin: 2px 0 2px 1px;
  padding-left: 2px;
  border-radius: 3px;
  background: linear-gradient(#fbfbfb, #f3f3f3);
  white-space: nowrap;
}

.grid-panel {
  height: 352px;
  border: 1px solid #a9a9a9;
  border-right: 0;
  background: #fff;
}

.grid-main {
  display: flex;
  height: 334px;
  padding: 1px 0 0 1px;
}

.vscroll {
  display: flex;
  flex-direction: column;
  align-items: center;
  width: 18px;
  margin-left: 1px;
  padding-top: 4px;
  background: #f0f0f0;
}

.vthumb {
  width: 15px;
  height: 17px;
  margin-top: auto;
  background: #c8c8c8;
}

.vscroll svg:last-child {
  margin: 4px 0 3px;
}

.grid {
  flex: none;
  align-self: flex-start;
  border-collapse: separate;
  border-spacing: 0;
  table-layout: fixed;
  background: #fff;
}

.upper { width: 1157px; }

.c21 { width: 21px; }
.c22 { width: 22px; }
.c34 { width: 34px; }
.c40 { width: 40px; }
.c54 { width: 54px; }
.c57 { width: 57px; }
.c62 { width: 62px; }
.c65 { width: 65px; }
.c80 { width: 80px; }
.c81 { width: 81px; }
.c86 { width: 86px; }
.c98 { width: 98px; }
.c120 { width: 120px; }
.c268 { width: 268px; }
.c792 { width: 792px; }
.c837 { width: 837px; }

.grid th,
.grid td {
  padding: 0 3px;
  border-right: 1px solid #c0c0c0;
  border-bottom: 1px solid #c0c0c0;
  overflow: hidden;
  white-space: nowrap;
  font-weight: 400;
}

.grid th {
  background: #efefef;
  text-align: center;
}

.grid th.hot {
  background: linear-gradient(#fdd998, #f2bd62);
}

.h19 td { height: 19px; }
.h20 th, .h20 td { height: 20px; }
.h41 td { height: 41px; }
.h53 td { height: 53px; }
.h65 td { height: 65px; }

.grid .rn {
  padding: 0;
  background: #efefef;
}

.blue td {
  background: #a6d8fa;
}

.blue .rn {
  background: #efefef;
}

.grid .rn.pick {
  background: #ffd58f;
}

.num {
  font: 11px/14px "Liberation Mono", monospace;
  letter-spacing: -.6px;
  text-align: right;
}

.n {
  font-family: "Liberation Mono", monospace;
  font-size: 11px;
  letter-spacing: -.6px;
}

.num-c,
.q-rn {
  font: 11px/14px "Liberation Mono", monospace;
  letter-spacing: -.6px;
  text-align: center;
}

.num-l,
.num-q {
  font: 11px/14px "Liberation Mono", monospace;
  letter-spacing: -.6px;
}

.grid .num-l {
  padding-left: 21px;
}

.grid .plus-cell {
  padding-left: 3px;
}

.end {
  text-align: right;
}

.grid td:has(> .branch) {
  padding: 0;
  vertical-align: top;
}

.branch {
  width: 35px;
  height: 11px;
  margin-left: 18px;
  border-left: 1px solid #c0c0c0;
  border-bottom: 1px solid #c0c0c0;
}

.grid .node {
  padding-left: 30px;
  position: relative;
  font: 11px/14px "Liberation Mono", monospace;
}

.minus,
.plus {
  position: absolute;
  left: 13px;
  top: 50%;
  width: 12px;
  height: 12px;
  margin-top: -6px;
  border: 1px solid #c0c0c0;
  background: #fff;
}

.minus::before,
.plus::before {
  content: "";
  position: absolute;
  left: 2px;
  top: 4px;
  width: 6px;
  border-top: 1px solid #000;
}

.minus::after {
  content: "";
  position: absolute;
  left: 4px;
  top: 11px;
  height: 40px;
  border-left: 1px solid #c0c0c0;
}

.plus {
  position: relative;
  display: inline-block;
  left: 0;
  top: 0;
  margin: 0 4px 0 0;
  vertical-align: -2px;
}

.plus::after {
  content: "";
  position: absolute;
  left: 4px;
  top: 2px;
  height: 6px;
  border-left: 1px solid #000;
}

.cur {
  background: #d5e8f7;
}

.grid .cb {
  padding: 0;
  text-align: center;
}

.chk {
  display: inline-block;
  width: 13px;
  height: 13px;
  border: 1px solid #333;
  background: #fff;
  vertical-align: -2px;
}

.chk-sm {
  flex: none;
  width: 11px;
  height: 11px;
  border-color: #999;
}

/* lower part */
.lower-tabs {
  display: flex;
  height: 32px;
  padding: 8px 0 0 3px;
}

.lower-tabs span {
  width: 70px;
  height: 20px;
  padding: 2px 0 0 4px;
  border: 2px solid;
  border-color: #888 #f8f8f8 #f0f0f0 #888;
  letter-spacing: .6px;
  white-space: nowrap;
}

.lower {
  display: flex;
  height: 217px;
}

.lower-grid {
  flex: none;
  width: 1051px;
  height: 217px;
  border: 1px solid #a9a9a9;
  background: #fff;
}

.lower-main {
  height: 198px;
  padding: 1px 0 0 1px;
}

.lower-main .grid {
  width: 1048px;
}

.side-panel {
  display: flex;
  flex-direction: column;
  width: 128px;
  padding: 4px 0 0 11px;
}

.btn-row {
  display: flex;
  gap: 7px;
  margin-bottom: 5px;
}

.btn-row.first {
  margin-left: 1px;
}

.btn {
  width: 47px;
  height: 23px;
  padding: 0;
  border: 1px solid #adadad;
  background: #e1e1e1;
  color: #000;
  font: inherit;
}

.btn.wide {
  width: 102px;
  margin-bottom: 6px;
}

.filter {
  display: grid;
  grid-template-columns: 67px 1fr;
  grid-auto-rows: 23px;
  align-items: center;
  width: 114px;
  height: 90px;
  margin: 0 0 0 -4px;
  padding: 6px 0 0 0;
  border: 1px solid #d8d8d8;
}

.filter legend {
  margin-left: 6px;
  padding: 0 1px;
}

.filter label,
.q-radios label {
  display: flex;
  align-items: center;
  gap: 3px;
}

.radio {
  position: relative;
  flex: none;
  width: 13px;
  height: 13px;
  border: 1px solid #333;
  border-radius: 50%;
  background: #fff;
}

.radio.soft {
  border-color: #a0a0a0;
}

.radio.on::after {
  content: "";
  position: absolute;
  left: 3px;
  top: 3px;
  width: 5px;
  height: 5px;
  border-radius: 50%;
  background: #111;
}

/* status bar */
.statusbar {
  display: flex;
  gap: 3px;
  height: 22px;
  padding-top: 3px;
  border-top: 2px solid #b5b5b5;
  background: #f0f0f0;
}

.statusbar span {
  height: 17px;
  padding-left: 2px;
  background: #fff;
  border: 1px solid #e2e2e2;
  white-space: nowrap;
  overflow: hidden;
  line-height: 15px;
}

.s1 { width: 375px; }
.s2 { width: 374px; }
.s3 { width: 225px; }
.s4 { width: 200px; }
.s5 { flex: 1; }

/* task bar */
.taskbar {
  display: flex;
  align-items: center;
  height: 40px;
  background: #06131a;
  color: #fff;
}

.start {
  display: flex;
  align-items: center;
  justify-content: center;
  width: 48px;
  height: 40px;
  background: #000;
}

.search {
  display: flex;
  align-items: center;
  width: 344px;
  height: 40px;
  padding-left: 9px;
  background: #3a3a3a;
  color: #a0a0a0;
  font-size: 13px;
}

.search span {
  margin-left: 7px;
  font-size: 13px;
  letter-spacing: .6px;
}

.mic {
  margin-left: auto;
  margin-right: 15px;
}

.task {
  position: relative;
  display: flex;
  flex: none;
  align-items: center;
  justify-content: center;
  width: 48px;
  height: 40px;
}

.task.wide {
  width: 51px;
}

.task.tv {
  width: 49px;
}

.task.run::after {
  content: "";
  position: absolute;
  left: 5px;
  right: 5px;
  bottom: 0;
  height: 2px;
  background: #7eb6e6;
}

.task.on {
  background: #2f3c42;
}

.task.on::after {
  left: 0;
  right: 0;
}

.t-link {
  margin-left: 13px;
  color: #ddd;
  white-space: nowrap;
}

.t-cpu,
.t-clock {
  display: flex;
  flex-direction: column;
  align-items: center;
  gap: 4px;
  white-space: nowrap;
}

.t-cpu {
  width: 60px;
  margin-left: 13px;
}

.tray {
  display: flex;
  align-items: center;
  gap: 9px;
  margin-left: 20px;
}

.t-ime {
  font-size: 13px;
}

.t-s {
  display: flex;
  align-items: center;
  justify-content: center;
  width: 15px;
  height: 17px;
  border-radius: 3px;
  background: #e8481c;
  font: bold 14px "Liberation Sans", sans-serif;
}

.t-clock {
  width: 62px;
  margin-left: 13px;
}

.t-note {
  position: relative;
  margin-left: 19px;
}

.t-note b {
  position: absolute;
  left: 9px;
  top: 8px;
  width: 15px;
  height: 15px;
  border-radius: 50%;
  background: #444;
  font: bold 11px/15px "Liberation Sans", sans-serif;
  text-align: center;
}

/* query dialog */
.dialog {
  position: absolute;
  left: 264px;
  top: 106px;
  display: flex;
  flex-direction: column;
  width: 851px;
  height: 512px;
  border: 1px solid #2e8ad8;
  background: #f0f0f0;
  box-shadow: 0 0 22px rgba(0, 0, 0, .55);
}

.dlg-title {
  display: flex;
  align-items: center;
  flex: none;
  height: 26px;
  padding-left: 8px;
  gap: 6px;
  background: #fff;
}

.dlg-btns {
  display: flex;
  gap: 34px;
  margin-left: auto;
  padding-right: 17px;
}

.dlg-tabs {
  display: flex;
  flex: none;
  height: 32px;
  padding-top: 4px;
  border-bottom: 2px solid #c4c4c4;
}

.tab {
  display: flex;
  align-items: center;
  justify-content: center;
  height: 21px;
  border-right: 1px solid #bbb;
  white-space: nowrap;
}

.t1 { width: 66px; }
.t2 { width: 56px; padding-right: 10px; }

.cur-tab {
  width: 42px;
  border: 1px solid #888;
  border-bottom-color: #f6f6f6;
  background: repeating-conic-gradient(#e4e4e4 0 25%, #fff 0 50%) 0 0 / 2px 2px;
}

.t4 { width: 57px; margin-left: 6px; border-left: 1px solid #bbb; }
.t5 { width: 82px; }

.dlg-btn {
  width: 71px;
  height: 21px;
  margin: 4px 0 0 6px;
}

.dlg-btn.first {
  margin-left: auto;
}

.dlg-btn:last-child {
  width: 69px;
}

.dlg-body {
  display: flex;
  flex: 1;
  min-height: 0;
}

.dlg-left {
  flex: none;
  width: 219px;
  border-right: 1px solid #bbb;
}

.dlg-right {
  flex: 1;
  background: #fff;
  padding: 2px 0 0 1px;
}

.combo {
  display: flex;
  align-items: center;
  justify-content: space-between;
  width: 215px;
  height: 21px;
  padding: 0 4px 0 1px;
  border: 1px solid #b4b4b4;
  background: #e3e3e3;
  white-space: nowrap;
}

.sub-tabs {
  display: flex;
  align-items: flex-end;
  height: 21px;
  padding-left: 1px;
  border-bottom: 1px solid #d8d8d8;
}

.sub-tabs span {
  display: flex;
  align-items: center;
  justify-content: center;
  width: 56px;
  height: 18px;
  border: 1px solid #d8d8d8;
  border-bottom: 0;
}

.sub-tabs .on {
  width: 62px;
  height: 21px;
  background: #fff;
}

.q-frame {
  width: 209px;
  height: 371px;
  margin: 2px 0 0 3px;
  border: 1px solid #8a8a8a;
  background: #fff;
}

.q-main {
  display: flex;
  height: 349px;
}

.q-tree {
  position: relative;
  flex: none;
  width: 189px;
  padding-top: 1px;
  overflow: hidden;
}

.q-row {
  position: relative;
  display: flex;
  align-items: center;
  height: 16px;
  white-space: nowrap;
}

.l0 { padding-left: 24px; }
.l1 { padding-left: 44px; }
.l2 { padding-left: 63px; }
.l3 { padding-left: 81px; }

.chev {
  position: absolute;
  margin-left: -19px;
}

.l3::before,
.dot::before {
  content: "";
  position: absolute;
  left: 72px;
  top: 8px;
  width: 8px;
  border-top: 1px dotted #777;
}

.dot::before {
  left: 54px;
}

.q-sel {
  padding: 0 2px;
  margin-left: -2px;
  background: #cfe6fb;
}

.q-v {
  position: absolute;
  width: 0;
  border-left: 1px dotted #777;
}

.v1 { left: 13px; top: 18px; height: 340px; }
.v2 { left: 32px; top: 50px; height: 260px; }
.v3 { left: 71px; top: 148px; height: 149px; }

.q-vs {
  width: 18px;
  margin: 0;
  padding-top: 3px;
}

.q-thumb {
  height: 169px;
  margin-top: 3px;
  width: 15px;
}

.vscroll .q-down {
  margin: auto 0 3px;
}

.q-hs {
  padding-left: 3px;
  width: 207px;
}

.q-hs .arrow {
  margin-left: 2px;
}

.q-radios {
  display: flex;
  height: 34px;
  padding-left: 13px;
  gap: 20px;
  align-items: center;
}

.q-radios label {
  gap: 7px;
}

.q-grid {
  width: 552px;
}

.q-grid td {
  padding: 0 2px;
}

.q-grid .q-rn {
  padding-right: 3px;
}

/* red boxes */
.mark {
  position: absolute;
  border: 3px solid #f00;
}

.m1 { left: 243px; top: 150px; width: 226px; height: 41px; }
.m2 { left: 498px; top: 153px; width: 257px; height: 125px; }
.m3 { left: 297px; top: 487px; width: 167px; height: 35px; }

/* input method bar */
.ime {
  position: absolute;
  left: 703px;
  top: 3px;
  display: flex;
  align-items: center;
  gap: 8px;
  width: 204px;
  height: 24px;
  padding-left: 30px;
  border: 1px solid #b9d3e8;
  background: rgba(255, 255, 255, .95);
}

.ime-logo {
  position: absolute;
  left: 0;
  top: -3px;
  width: 26px;
  height: 26px;
  border-radius: 5px;
  background: #f2501e;
  color: #fff;
  font: bold 24px/26px "Liberation Sans", sans-serif;
  text-align: center;
}

.ime-zh {
  color: #1a7ac8;
  font-size: 14px;
  font-weight: 700;
}

.ime-pt {
  width: 14px;
  color: #1a7ac8;
  font: bold 14px "Liberation Sans", sans-serif;
}

.ime-user {
  margin-right: -8px;
}

/* speed ball */
.ball {
  position: absolute;
  left: 1090px;
  top: -30px;
  display: flex;
  align-items: flex-end;
  justify-content: center;
  width: 48px;
  height: 48px;
  padding-bottom: 2px;
  border: 2px solid #ddd;
  border-radius: 50%;
  background: #3dbb50;
  box-shadow: 0 1px 3px rgba(0, 0, 0, .5);
  color: #fff;
  font: bold 12px "Liberation Sans", sans-serif;
}
```
